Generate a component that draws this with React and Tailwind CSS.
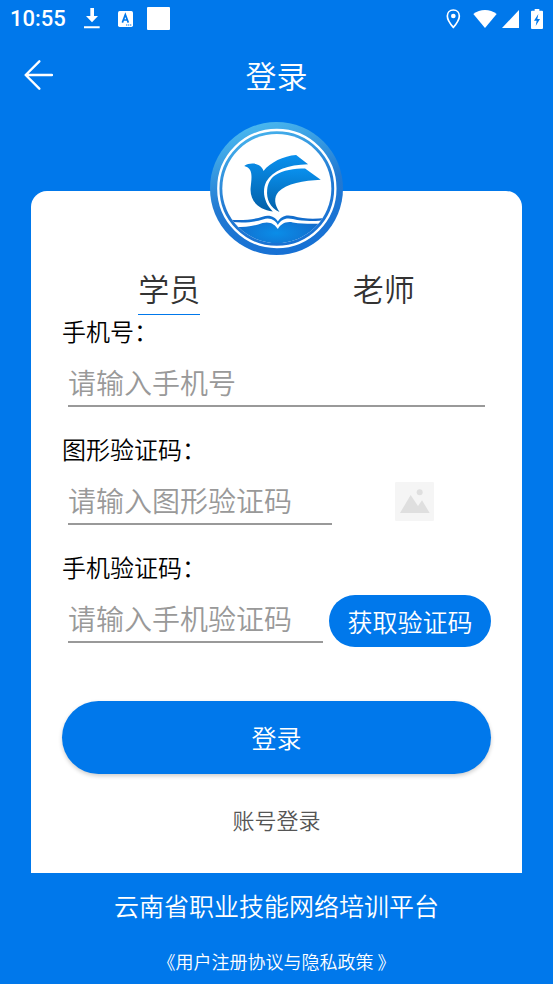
import { useState } from "react";

function StatusBar() {
  return (
    <div className="flex h-[37px] items-center justify-between px-2.5 text-white">
      <div className="flex items-center">
        <span className="w-[74px] font-[Roboto,sans-serif] text-[22px] leading-6 font-medium">10:55</span>
        <svg className="mr-[18px] h-[21px] w-4" viewBox="0 0 48 63" fill="currentColor" aria-hidden="true">
          <path d="M19 0h11v24h12L24 43 6 24h13zM0 55h47v6H0z" />
        </svg>
        <svg className="mr-[14px] h-4 w-[15px]" viewBox="0 0 45 48" aria-hidden="true">
          <rect width="45" height="48" rx="5" fill="currentColor" />
          <path d="M13 35 22 11l9 24M16 27h12" fill="none" stroke="#0078eb" strokeWidth="5" />
          <path d="M24 42h4m2 0h4m2 0h4" stroke="#0078eb" strokeWidth="3" />
        </svg>
        <span className="size-[23px] rounded-[1px] bg-white" />
      </div>
      <div className="flex items-center">
        <svg className="mr-3 h-5 w-[15px]" viewBox="0 0 45 60" aria-hidden="true">
          <path d="M22 3C11 3 4 11 4 21c0 14 18 34 18 34s18-20 18-34C40 11 33 3 22 3z" fill="none" stroke="currentColor" strokeWidth="5" />
          <circle cx="22" cy="21" r="7" fill="currentColor" />
        </svg>
        <svg className="mr-[5px] h-[18px] w-6" viewBox="0 0 72 54" fill="currentColor" aria-hidden="true">
          <path d="M1 12C21-4 51-4 71 12L36 54z" />
        </svg>
        <svg className="mr-3 h-[18px] w-[17px]" viewBox="0 0 51 54" fill="currentColor" aria-hidden="true">
          <path d="M51 0v54H0z" />
        </svg>
        <svg className="h-5 w-3" viewBox="0 0 36 60" aria-hidden="true">
          <path d="M11 0h14v5h8q3 0 3 3v49q0 3-3 3H3q-3 0-3-3V8q0-3 3-3h8z" fill="currentColor" />
          <path d="M22 15 9 35h8l-3 16 13-21h-8z" fill="#0078eb" />
        </svg>
      </div>
    </div>
  );
}

function Logo() {
  return (
    <svg className="relative z-10 mx-auto mt-2.5 size-[133px]" viewBox="26 21 400 400" role="img" aria-label="云南省职业技能网络培训平台">
      <defs>
        <linearGradient id="ring" x1="0.3" y1="0" x2="0.6" y2="1">
          <stop offset="0" stopColor="#4bbaf0" />
          <stop offset="0.55" stopColor="#2279d2" />
          <stop offset="1" stopColor="#1670d4" />
        </linearGradient>
        <linearGradient id="bird" x1="0" y1="0" x2="0" y2="1">
          <stop offset="0" stopColor="#0990ee" />
          <stop offset="1" stopColor="#0360a8" />
        </linearGradient>
        <radialGradient id="book" cx="0.5" cy="0.45" r="0.5">
          <stop offset="0" stopColor="#0a8de8" />
          <stop offset="1" stopColor="#1369c9" />
        </radialGradient>
        <clipPath id="disc">
          <circle cx="227" cy="221" r="164" />
        </clipPath>
      </defs>
      <circle cx="226" cy="221" r="200" fill="url(#ring)" />
      <circle cx="227" cy="221" r="176" fill="none" stroke="#fff" strokeWidth="7" />
      <circle cx="227" cy="221" r="164" fill="#fff" />
      <path d="M129 153C148 141 179 144 187 168C207 142 247 123 285 120L321 148C261 150 215 165 195 201C181 231 190 265 215 290C174 285 146 260 148 221C150 193 159 160 129 153z" fill="url(#bird)" />
      <path d="M222 181C245 166 280 161 312 161L359 195C308 197 256 207 232 231C217 248 220 270 235 292C206 279 195 253 198 224C200 206 207 191 222 181z" fill="url(#bird)" />
      <g clipPath="url(#disc)">
        <path d="M85 315C125 317 157 315 184 306C207 298 223 309 230 320C239 306 253 298 276 304C306 313 337 313 372 310V420H80z" fill="url(#book)" />
        <path d="M91 322C131 325 158 323 185 314C207 306 224 317 230 331C240 315 253 308 275 313C309 321 335 319 363 317L353 327C323 328 303 327 275 323C253 319 239 328 230 343C221 329 207 319 184 325C156 335 132 337 101 337z" fill="#fff" />
      </g>
    </svg>
  );
}

const inputStyle =
  "h-[58px] min-w-0 flex-1 rounded-none border-b-2 border-[#999] bg-transparent pt-2.5 text-[28px] leading-10 text-[#333] outline-none placeholder:text-[#999] placeholder:opacity-100";
const labelStyle = "block h-[34px] text-[24px] leading-8 text-black";

export default function App() {
  const [tab, setTab] = useState("student");
  const tabs = [
    { id: "student", text: "学员" },
    { id: "teacher", text: "老师" },
  ];
  return (
    <main lang="zh-CN" className="flex min-h-screen flex-col bg-[#0078eb] font-['Noto_Sans_CJK_SC',sans-serif] font-[350]">
      <StatusBar />
      <header className="grid h-[75px] grid-cols-[1fr_auto_1fr] items-center px-6 text-white">
        <button type="button" aria-label="返回" className="justify-self-start">
          <svg className="h-[30px] w-[29px]" viewBox="0 0 87 90" fill="none" stroke="currentColor" strokeWidth="7" strokeLinecap="round" strokeLinejoin="round">
            <path d="M46 4 5 45l41 41M5 45h79" />
          </svg>
        </button>
        <h1 className="text-[31px] leading-10 font-[350]">登录</h1>
      </header>
      <Logo />
      <form className="mx-[31px] -mt-16 rounded-t-2xl bg-white px-[31px] pt-[74px] pb-[35px]" onSubmit={(e) => e.preventDefault()}>
        <div className="grid grid-cols-2 justify-items-center">
          {tabs.map((t) => (
            <button
              key={t.id}
              type="button"
              aria-pressed={tab === t.id}
              onClick={() => setTab(t.id)}
              className={"h-[50px] border-b pb-1 text-[31px] leading-[44px] text-[#333] " + (tab === t.id ? "border-[#0078eb]" : "border-transparent")}
            >
              {t.text}
            </button>
          ))}
        </div>

        <label htmlFor="phone" className={labelStyle}>手机号：</label>
        <div className="mb-[26px] flex px-1.5">
          <input id="phone" type="tel" placeholder="请输入手机号" className={inputStyle} />
        </div>

        <label htmlFor="captcha" className={labelStyle}>图形验证码：</label>
        <div className="mb-[26px] flex gap-1.5 pl-1.5">
          <input id="captcha" type="text" placeholder="请输入图形验证码" className={inputStyle} />
          <button type="button" aria-label="图形验证码" className="flex w-[153px] justify-center pt-[15px]">
            <svg className="size-[39px]" viewBox="0 0 117 117">
              <rect width="117" height="117" rx="4" fill="#f5f5f5" />
              <path d="M15 93 47 39 69 72 81 55 104 93z" fill="#dfdfdf" />
              <circle cx="74" cy="31" r="9" fill="#dfdfdf" />
            </svg>
          </button>
        </div>

        <label htmlFor="sms" className={labelStyle}>手机验证码：</label>
        <div className="flex items-start gap-1.5 pl-1.5">
          <input id="sms" type="text" placeholder="请输入手机验证码" className={inputStyle} />
          <button type="button" className="mt-2.5 h-[52px] w-[162px] rounded-full bg-[#0078eb] text-[25px] leading-[50px] text-white">
            获取验证码
          </button>
        </div>

        <button type="submit" className="mt-[54px] block h-[73px] w-full rounded-full bg-[#0078eb] text-[25px] text-white shadow-[0_2px_4px_rgba(0,0,0,0.2)]">
          登录
        </button>
        <a href="#account" className="mx-auto mt-[26px] block w-fit text-[22px] leading-[38px] text-[#555]">账号登录</a>
      </form>
      <footer className="text-center text-white">
        <p className="text-[25px] leading-[65px]">云南省职业技能网络培训平台</p>
        <a href="#terms" className="block text-[18px] leading-[46px]">《用户注册协议与隐私政策 》</a>
      </footer>
    </main>
  );
}
